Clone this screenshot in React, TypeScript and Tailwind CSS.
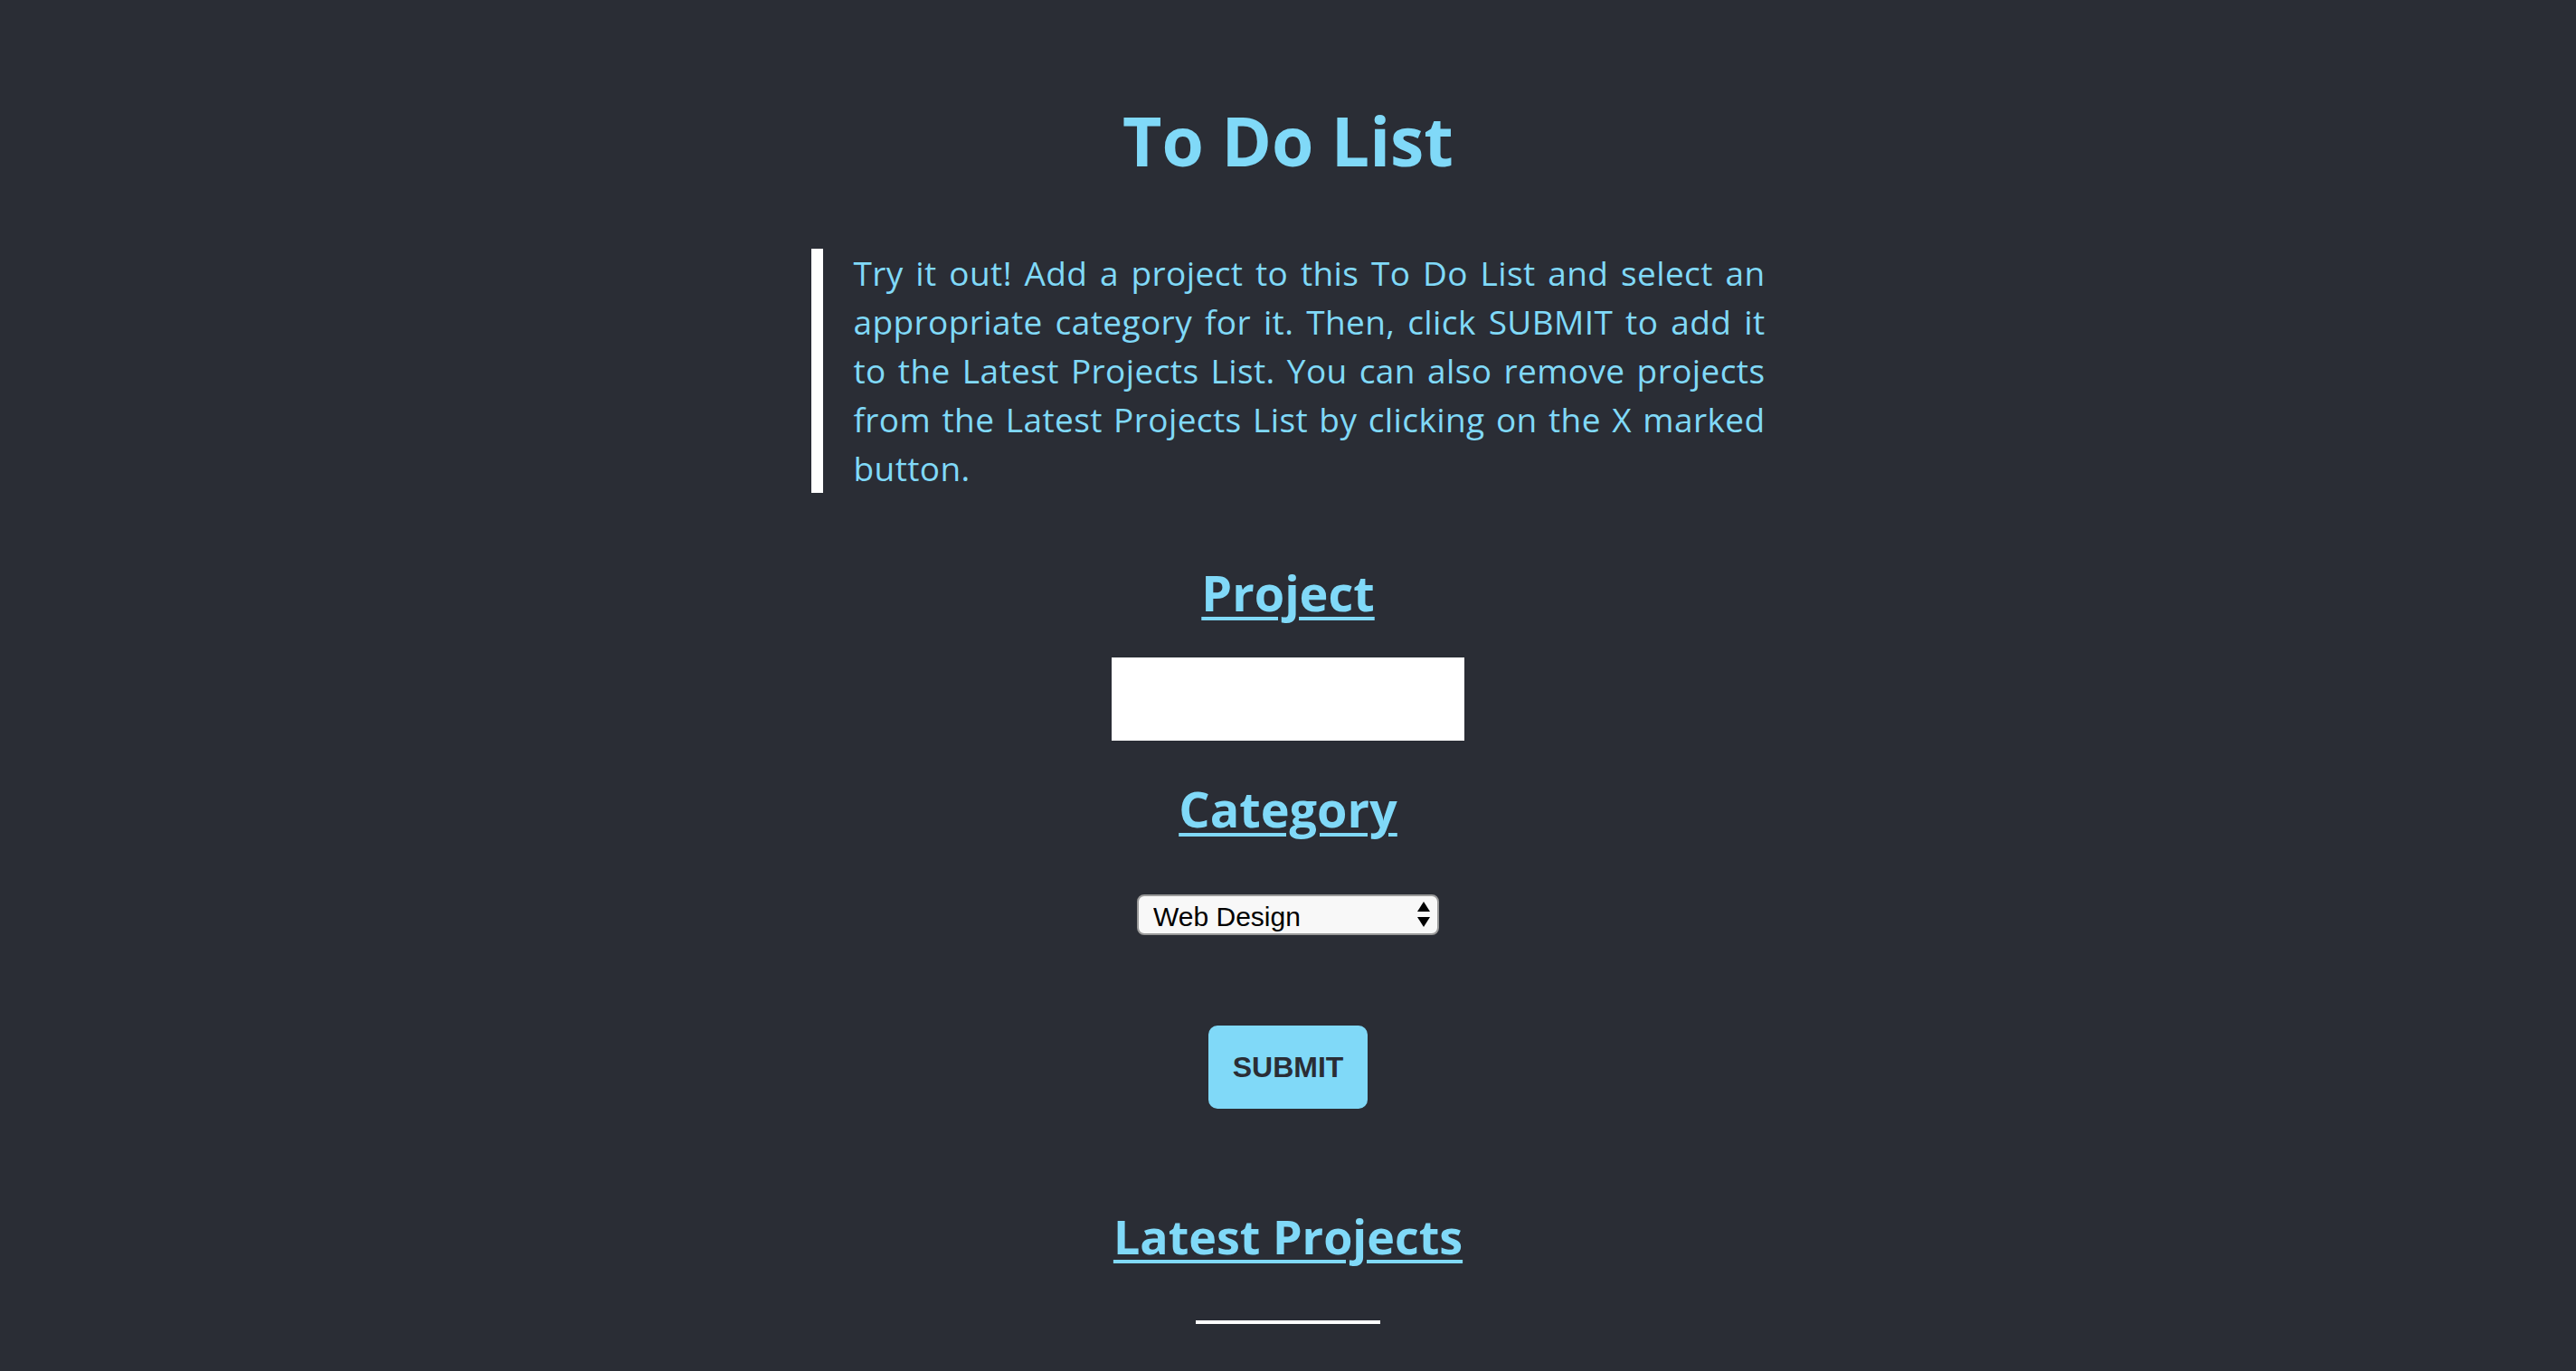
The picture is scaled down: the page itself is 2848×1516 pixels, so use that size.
import React from 'react';

const heading = "font-['Open_Sans',sans-serif] font-bold text-[#80d9f8] underline underline-offset-[6px] decoration-[4px]";

const introLines = [
  'Try it out! Add a project to this To Do List and select an',
  'appropriate category for it. Then, click SUBMIT to add it',
  'to the Latest Projects List. You can also remove projects',
  'from the Latest Projects List by clicking on the X marked',
  'button.',
];

export default function App() {
  return (
    <div className="min-h-screen bg-[#2a2d35] flex flex-col items-center pt-[100px] pb-[60px]">
      <h1 className="font-['Open_Sans',sans-serif] font-bold text-[75px] leading-[110px] text-[#80d9f8]">
        To Do List
      </h1>
      <blockquote className="mt-[65px] w-[1055px] border-l-[13px] border-white pl-[34px] font-['Open_Sans',sans-serif] text-[37px] leading-[54px] text-[#80d9f8] tracking-[0.4px]">
        {introLines.map((line, i) => (
          <span
            key={i}
            className={i < introLines.length - 1 ? 'block text-justify [text-align-last:justify]' : 'block'}
          >
            {line}
          </span>
        ))}
      </blockquote>
      <h2 className={`${heading} mt-[70px] text-[54px] leading-[80px]`}>Project</h2>
      <input type="text" className="mt-[32px] w-[390px] h-[92px] bg-white outline-none px-3 text-[30px]" />
      <h2 className={`${heading} mt-[35px] text-[54px] leading-[80px]`}>Category</h2>
      <div className="relative mt-[55px] w-[334px] h-[45px]">
        <select
          defaultValue="Web Design"
          className="appearance-none w-full h-full rounded-[8px] border-2 border-[#9a9a9a] bg-[#f8f8f8] pl-[16px] font-['Liberation_Sans',sans-serif] text-[30px] text-black outline-none"
        >
          <option>Web Design</option>
          <option>Graphic Design</option>
          <option>Development</option>
          <option>Marketing</option>
        </select>
        <svg
          className="pointer-events-none absolute right-[10px] top-[8px]"
          width="14"
          height="29"
          viewBox="0 0 14 29"
        >
          <path d="M7 0 L14 11 L0 11 Z" fill="#000" />
          <path d="M0 17 L14 17 L7 28 Z" fill="#000" />
        </svg>
      </div>
      <button className="mt-[100px] w-[176px] h-[92px] rounded-[10px] bg-[#80d9f8] font-['Liberation_Sans',sans-serif] font-bold text-[32px] text-[#2a2d35]">
        SUBMIT
      </button>
      <h2 className={`${heading} mt-[101px] text-[52px] leading-[80px]`}>Latest Projects</h2>
      <div className="mt-[53px] w-[204px] h-[4px] bg-white" />
    </div>
  );
}
